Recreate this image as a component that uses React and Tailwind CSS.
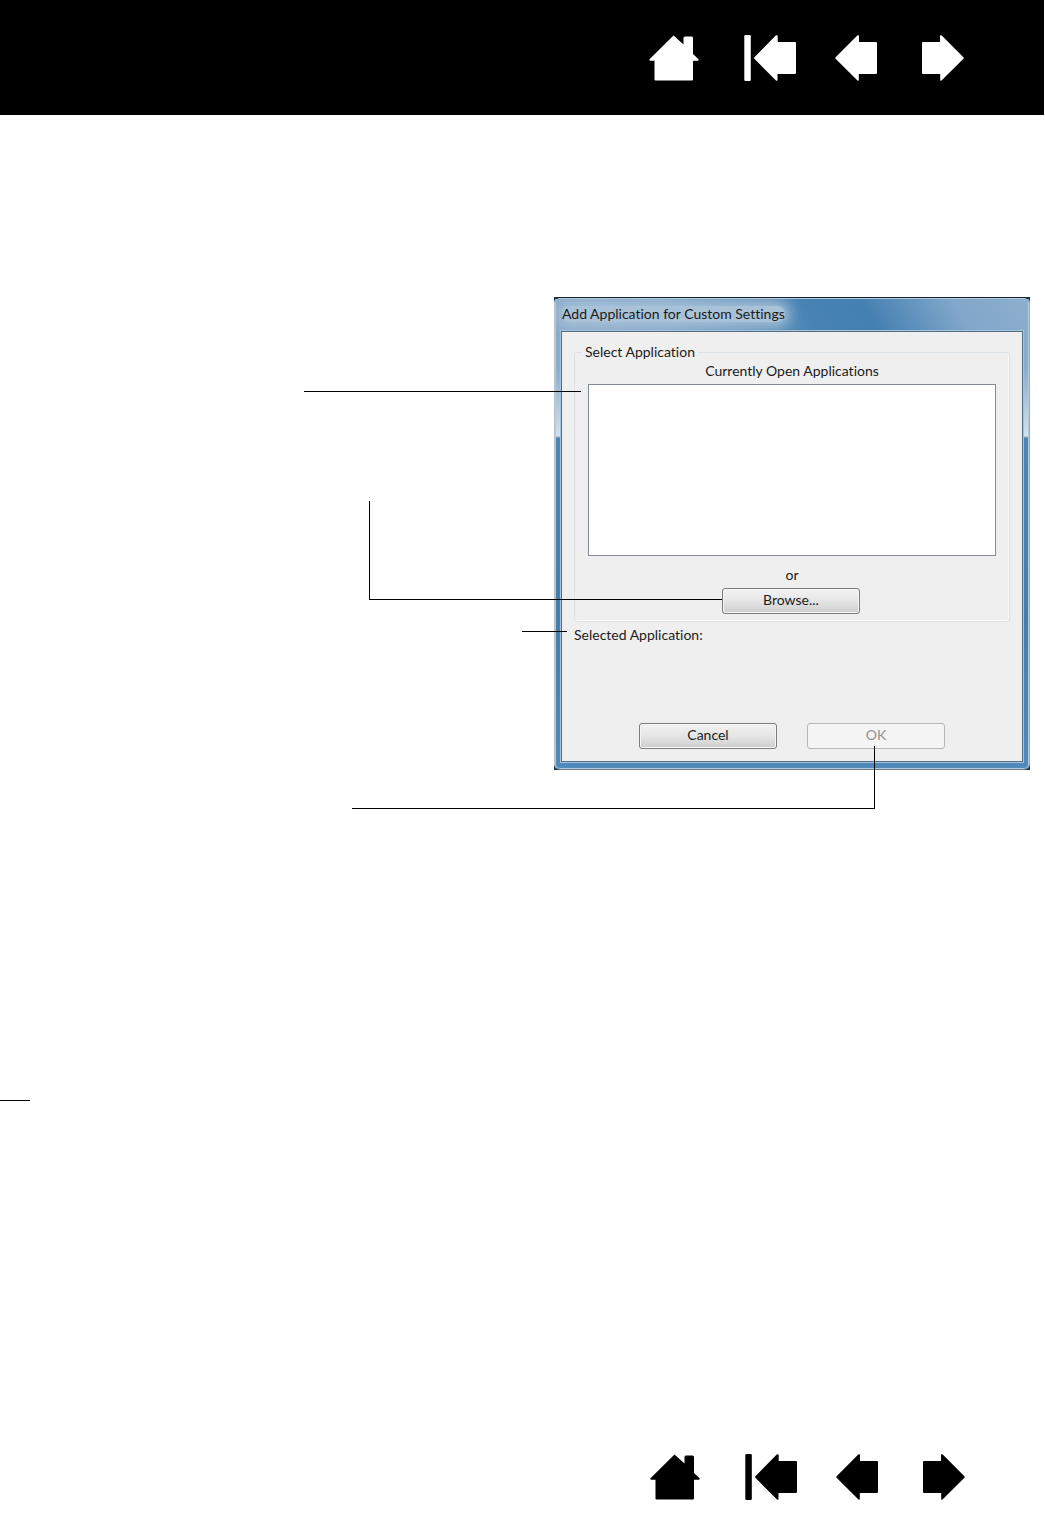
import clsx from "clsx";

const HomeIcon = () => (
  <svg width="50" height="46" viewBox="0 0 50 46" fill="currentColor" aria-hidden="true">
    <path d="M24.5 0.5 L34.5 9.5 V3 Q34.5 1.5 36 1.5 H42.5 Q44 1.5 44 3 V19 L49.5 24.3 Q50 25.5 49 25.8 H44 V44.5 Q44 45.5 43 45.5 H6.5 Q5.5 45.5 5.5 44.5 V25.8 H1 Q0 25.5 0.5 24.3 Z" />
  </svg>
);

const ArrowIcon = ({ flip }) => (
  <svg
    width="42"
    height="46"
    viewBox="0 0 42 46"
    fill="currentColor"
    aria-hidden="true"
    className={clsx(flip && "-scale-x-100")}
  >
    <path d="M22.5 0.3 Q24 -0.2 24 1 V7 H41 Q42 7 42 8 V38 Q42 39 41 39 H23.8 V45 Q23.8 46.2 22.5 45.5 L0.6 23.8 Q-0.1 23 0.6 22.2 Z" />
  </svg>
);

const FirstIcon = () => (
  <svg width="52" height="46" viewBox="0 0 52 46" fill="currentColor" aria-hidden="true">
    <rect x="0.3" y="0" width="6.5" height="46" rx="1.2" />
    <path d="M32 0.3 Q33.7 -0.2 33.7 1 V7 H51 Q52 7 52 8 V38 Q52 39 51 39 H33.5 V45 Q33.5 46.2 32 45.5 L10.4 23.8 Q9.7 23 10.4 22.2 Z" />
  </svg>
);

const PageNav = ({ label, className }) => (
  <nav aria-label={label} className={clsx("flex items-center justify-end pr-20", className)}>
    <a href="#home" aria-label="Home">
      <HomeIcon />
    </a>
    <a href="#first" aria-label="First page" className="ml-[45px]">
      <FirstIcon />
    </a>
    <a href="#previous" aria-label="Previous page" className="ml-[39px]">
      <ArrowIcon />
    </a>
    <a href="#next" aria-label="Next page" className="ml-[45px]">
      <ArrowIcon flip />
    </a>
  </nav>
);

const DialogButton = ({ children, disabled, className }) => (
  <button
    type="button"
    disabled={disabled}
    className={clsx(
      "h-[26px] w-[138px] rounded-[3px] border pb-[2px] text-center leading-4",
      disabled
        ? "border-[#b4b9bc] bg-[#f4f4f4] text-[#929292]"
        : "border-[#7c7c7c] bg-linear-to-b from-[#f2f2f2] from-0% via-[#e6e6e6] via-48% to-[#cecece] shadow-[inset_0_0_0_1px_#f6f6f6]",
      className
    )}
  >
    {children}
  </button>
);

// Leader lines that run from the notes to parts of the dialog
const Callouts = () => (
  <svg
    className="pointer-events-none absolute top-0 right-0"
    width="726"
    height="512"
    viewBox="0 0 726 512"
    fill="none"
    stroke="#000"
    shapeRendering="crispEdges"
    aria-hidden="true"
  >
    <path d="M0 94.5 H277" />
    <path d="M65.5 204 V302.5 H418" />
    <path d="M218 334.5 H263" />
    <path d="M48 511.5 H570.5 V449" />
  </svg>
);

const AddApplicationDialog = () => (
  <section
    role="dialog"
    aria-labelledby="dialog-title"
    className="w-[476px] bg-[#17364f] text-sm leading-4 text-[#1b1b1b] [font-variant-ligatures:none]"
  >
    <div className="rounded-[6px] border border-t-[#17232e] border-r-[#a3a8ad] border-b-[#667785] border-l-[#b9c1c7] bg-[linear-gradient(to_bottom,#8aaccc_0px,#8aaccc_70px,#d3e2ed_138px,#4c86b9_140px,#427eb0_320px,#4f8abb_100%)] px-[6px] pb-[7px] shadow-[inset_0_0_0_1px_#b2cbdf]">
      <header className="-mx-[5px] mt-px flex h-8 items-center overflow-hidden rounded-t-[5px] bg-[linear-gradient(60deg,#8aabc9_0%,#7fa5c8_25%,#4782b3_54%,#4580b2_66%,#80a6c9_84%,#8dafce_100%)] px-[6px] pb-[2px]">
        <h1 id="dialog-title" className="rounded-lg bg-[#a9c2d8] shadow-[0_0_14px_5px_#a9c2d8]">
          Add Application for Custom Settings
        </h1>
      </header>
      <form className="border border-[#536d83] bg-[#efefef] px-3 pt-3 pb-3 shadow-[0_0_0_1px_#a8c4da]">
        <fieldset className="flex flex-col items-center rounded-[3px] border border-[#dbe3e9] px-[13px] pb-[7px] shadow-[inset_-1px_-1px_0_#f8f8f8]">
          <legend className="-ml-[6px] px-[3px]">Select Application</legend>
          <label htmlFor="open-apps" className="mt-[3px]">
            Currently Open Applications
          </label>
          <select
            id="open-apps"
            multiple
            className="mt-[5px] h-[172px] w-full appearance-none border border-[#858b94] bg-white"
          />
          <p className="mt-[11px]">or</p>
          <DialogButton className="mt-[5px] mr-[2px]">Browse...</DialogButton>
        </fieldset>
        <p className="mt-[5px]">Selected Application:</p>
        <div className="mt-20 flex justify-center gap-[30px]">
          <DialogButton>Cancel</DialogButton>
          <DialogButton disabled>OK</DialogButton>
        </div>
      </form>
    </div>
  </section>
);

const App = () => (
  <div className="flex min-h-screen flex-col bg-white font-['Lato','Noto_Sans',sans-serif]">
    <header className="mr-px bg-black pt-[35px] pb-[34px] text-white">
      <PageNav label="Top navigation" />
    </header>
    <main className="grow pt-[182px]">
      <div className="relative mr-[15px] flex justify-end">
        <AddApplicationDialog />
        <Callouts />
      </div>
      <hr className="mt-[330px] w-[30px] border-t border-black" />
    </main>
    <footer className="pb-[35px] text-black">
      <PageNav label="Bottom navigation" />
    </footer>
  </div>
);

export default App;
